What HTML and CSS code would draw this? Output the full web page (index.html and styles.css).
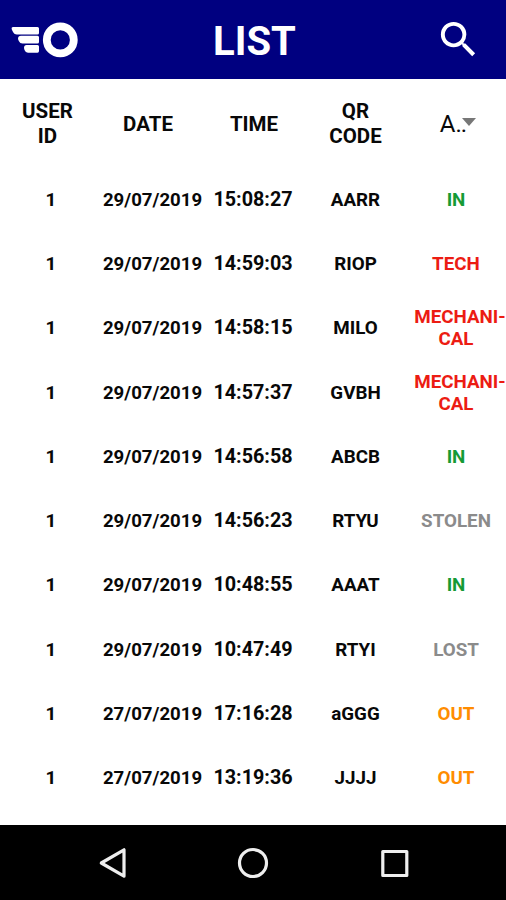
FILE: index.html
```html
<!DOCTYPE html>
<html lang="en">
<head>
<meta charset="utf-8">
<title>List</title>
<link rel="stylesheet" href="styles.css">
</head>
<body>
<header class="bar">
  <svg class="logo" width="68" height="36" viewBox="0 0 68 36" fill="#fff"><path d="M2 5H26.500Q28 5 28 6.500V11Q28 12.500 26.500 12.500H6Q3 12.500 1.500 9L.6 7Q.3 5 2 5zM10 13.700H26.500Q28 13.700 28 15.200V20Q28 21.600 26.500 21.600H11.500Q9 21.600 7.800 19L7 17Q7 13.700 10 13.700zM15.500 23H26.500Q28 23 28 24.500V29Q28 30.700 26.500 30.700H17Q14.500 30.700 13.500 28L13 26Q13 23 15.500 23z"/><circle cx="49.300" cy="17.900" r="13.500" fill="none" stroke="#fff" stroke-width="7.800"/></svg>
  <h1>LIST</h1>
  <svg class="search" width="47" height="47" viewBox="0 0 24 24" fill="#fff"><path d="M15.500 14h-.79l-.28-.27A6.470 6.470 0 0 0 16 9.500 6.500 6.500 0 1 0 9.500 16c1.610 0 3.090-.59 4.230-1.570l.27.28v.79l5 4.990L20.490 19l-4.990-5zm-6 0C7.010 14 5 11.990 5 9.500S7.010 5 9.500 5 14 7.010 14 9.500 11.990 14 9.500 14z"/></svg>
</header>
<main class="table">
  <div class="row head"><span class="c1">USER<br>ID</span><span class="c2">DATE</span><span class="c3">TIME</span><span class="c4">QR<br>CODE</span><span class="filter">A<span class="dots">..</span><i class="arrow"></i></span></div>
  <div class="row"><span class="c1">1</span><span class="c2">29/07/2019</span><span class="c3">15:08:27</span><span class="c4">AARR</span><span class="c5 in">IN</span></div>
  <div class="row"><span class="c1">1</span><span class="c2">29/07/2019</span><span class="c3">14:59:03</span><span class="c4">RIOP</span><span class="c5 fault">TECH</span></div>
  <div class="row"><span class="c1">1</span><span class="c2">29/07/2019</span><span class="c3">14:58:15</span><span class="c4">MILO</span><span class="c5 fault"><span class="broken">MECHANI-</span><br>CAL</span></div>
  <div class="row"><span class="c1">1</span><span class="c2">29/07/2019</span><span class="c3">14:57:37</span><span class="c4">GVBH</span><span class="c5 fault"><span class="broken">MECHANI-</span><br>CAL</span></div>
  <div class="row"><span class="c1">1</span><span class="c2">29/07/2019</span><span class="c3">14:56:58</span><span class="c4">ABCB</span><span class="c5 in">IN</span></div>
  <div class="row"><span class="c1">1</span><span class="c2">29/07/2019</span><span class="c3">14:56:23</span><span class="c4">RTYU</span><span class="c5 gone">STOLEN</span></div>
  <div class="row"><span class="c1">1</span><span class="c2">29/07/2019</span><span class="c3">10:48:55</span><span class="c4">AAAT</span><span class="c5 in">IN</span></div>
  <div class="row"><span class="c1">1</span><span class="c2">29/07/2019</span><span class="c3">10:47:49</span><span class="c4">RTYI</span><span class="c5 gone">LOST</span></div>
  <div class="row"><span class="c1">1</span><span class="c2">27/07/2019</span><span class="c3">17:16:28</span><span class="c4">aGGG</span><span class="c5 out">OUT</span></div>
  <div class="row"><span class="c1">1</span><span class="c2">27/07/2019</span><span class="c3">13:19:36</span><span class="c4">JJJJ</span><span class="c5 out">OUT</span></div>
</main>
<nav class="nav">
  <svg width="30" height="32" viewBox="0 0 30 32"><path d="M28 2.800v26.400L5.300 16z"/></svg>
  <svg width="32" height="32" viewBox="0 0 32 32"><circle cx="16" cy="16" r="13.500"/></svg>
  <svg width="30" height="32" viewBox="0 0 30 32"><path d="M2.800 4.500h24v24h-24z"/></svg>
</nav>
</body>
</html>
```
FILE: styles.css
```css
* { box-sizing: border-box; }
body { margin: 0; width: 506px; height: 900px; display: flex; flex-direction: column; overflow: hidden; background: #fff; color: #080808; font-family: Roboto, sans-serif; }
.bar { height: 79.400px; flex: none; background: #000080; color: #fff; display: grid; grid-template-columns: 80px 1fr 72px; align-items: center; }
.logo { margin-left: 11px; }
.bar h1 { margin: 5px 0 0; padding-right: 5px; font-size: 40px; line-height: 48px; text-align: center; }
.search { margin-left: 1px; }
.table { flex: 1; padding-top: .4px; }
.row { display: grid; grid-template-columns: 102px 101px 102px 101px 100px; height: 64.25px; align-items: center; text-align: center; font-size: 18.800px; line-height: 22px; font-weight: 700; }
.head { height: 88px; font-size: 20.500px; line-height: 25px; padding-top: 1px; }
.head .c1 { margin-right: 7px; }
.head .c2 { margin-right: 9px; font-size: 20.500px; }
.head .c3 { font-size: 20.500px; margin: 0; }
.c2 { white-space: nowrap; font-size: 18.600px; }
.c3 { font-size: 19.800px; margin-right: 2px; }
.filter { display: flex; align-items: center; justify-content: center; font-weight: 400; font-size: 24px; padding-left: 4px; }
.dots { letter-spacing: -1px; }
.arrow { border: 7px solid transparent; border-top: 8px solid #777; border-bottom: 0; margin: -4px 0 0 -4px; }
.broken { display: inline-block; margin-right: -8px; white-space: nowrap; }
.in { color: #159a35; }
.fault { color: #ec1c13; }
.gone { color: #8b8b8b; }
.out { color: #ff8c00; }
.nav { height: 75px; flex: none; background: #000; display: flex; align-items: center; justify-content: center; gap: 111px; }
.nav svg { fill: none; stroke: #eee; stroke-width: 3.200; stroke-linejoin: round; }
```
